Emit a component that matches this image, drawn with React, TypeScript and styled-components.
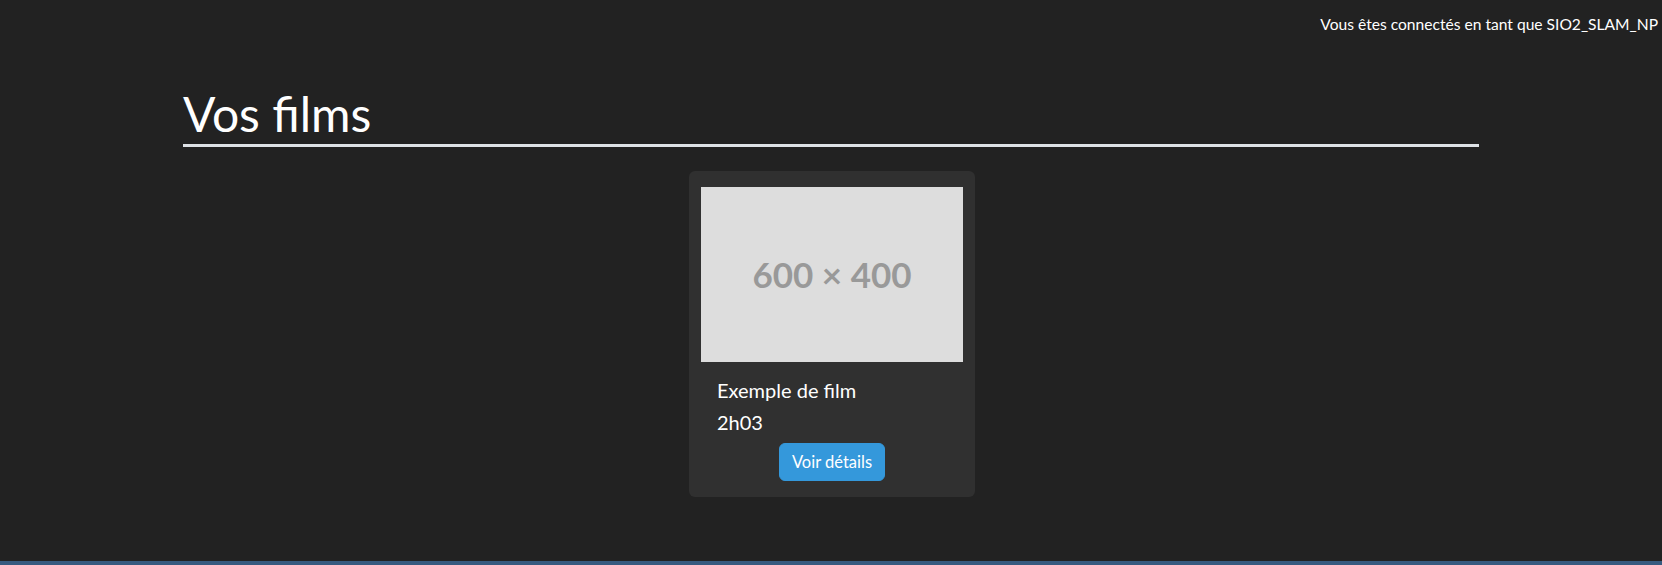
import React from "react";
import styled, { createGlobalStyle } from "styled-components";

const Global = createGlobalStyle`
  html, body { margin: 0; padding: 0; background: #222222; }
  body { font-family: Lato, "Noto Sans", sans-serif; color: #ffffff; }
  * { box-sizing: border-box; }
`;

const Page = styled.div`
  height: 565px;
  display: flex;
  flex-direction: column;
  overflow: hidden;
`;

const TopBar = styled.header`
  display: flex;
  justify-content: flex-end;
  padding: 12px 4px 0 0;
  font-size: 15.6px;
  line-height: 24px;
`;

const Main = styled.main`
  flex: 1;
  width: 1320px;
  margin: 0 auto;
  padding: 0 12px;
`;

const Title = styled.h1`
  margin: 49px 0 0;
  font-size: 48px;
  font-weight: 400;
  line-height: 57.6px;
  padding-bottom: 1px;
  border-bottom: 3px solid #dee2e6;
`;

const Grid = styled.section`
  display: flex;
  justify-content: center;
  margin-top: 24px;
  padding-left: 2px;
`;

const Card = styled.article`
  width: 286px;
  background: #303030;
  border-radius: 6px;
  padding: 16px 12px 16px;
  display: flex;
  flex-direction: column;
`;

const Thumb = styled.div`
  height: 175px;
  background: #dddddd;
  color: #999999;
  display: flex;
  align-items: center;
  justify-content: center;
  font-size: 35px;
  font-weight: 700;
`;

const Body = styled.div`
  padding: 16px 16px 0;
  display: flex;
  flex-direction: column;
`;

const Line = styled.p`
  margin: 0 0 8.5px;
  font-size: 20px;
  line-height: 24px;
`;

const Button = styled.button`
  align-self: center;
  font-family: inherit;
  font-size: 16.5px;
  line-height: 24px;
  color: #ffffff;
  background: #3498db;
  border: 1px solid #3498db;
  border-radius: 6px;
  padding: 6px 12px;
`;

const Footer = styled.footer`
  height: 4px;
  background: #375a7f;
`;

export default function App() {
  return (
    <>
      <Global />
      <Page>
        <TopBar>Vous êtes connectés en tant que SIO2_SLAM_NP</TopBar>
        <Main>
          <Title>Vos films</Title>
          <Grid>
            <Card>
              <Thumb>600 × 400</Thumb>
              <Body>
                <Line>Exemple de film</Line>
                <Line>2h03</Line>
                <Button>Voir détails</Button>
              </Body>
            </Card>
          </Grid>
        </Main>
        <Footer />
      </Page>
    </>
  );
}
